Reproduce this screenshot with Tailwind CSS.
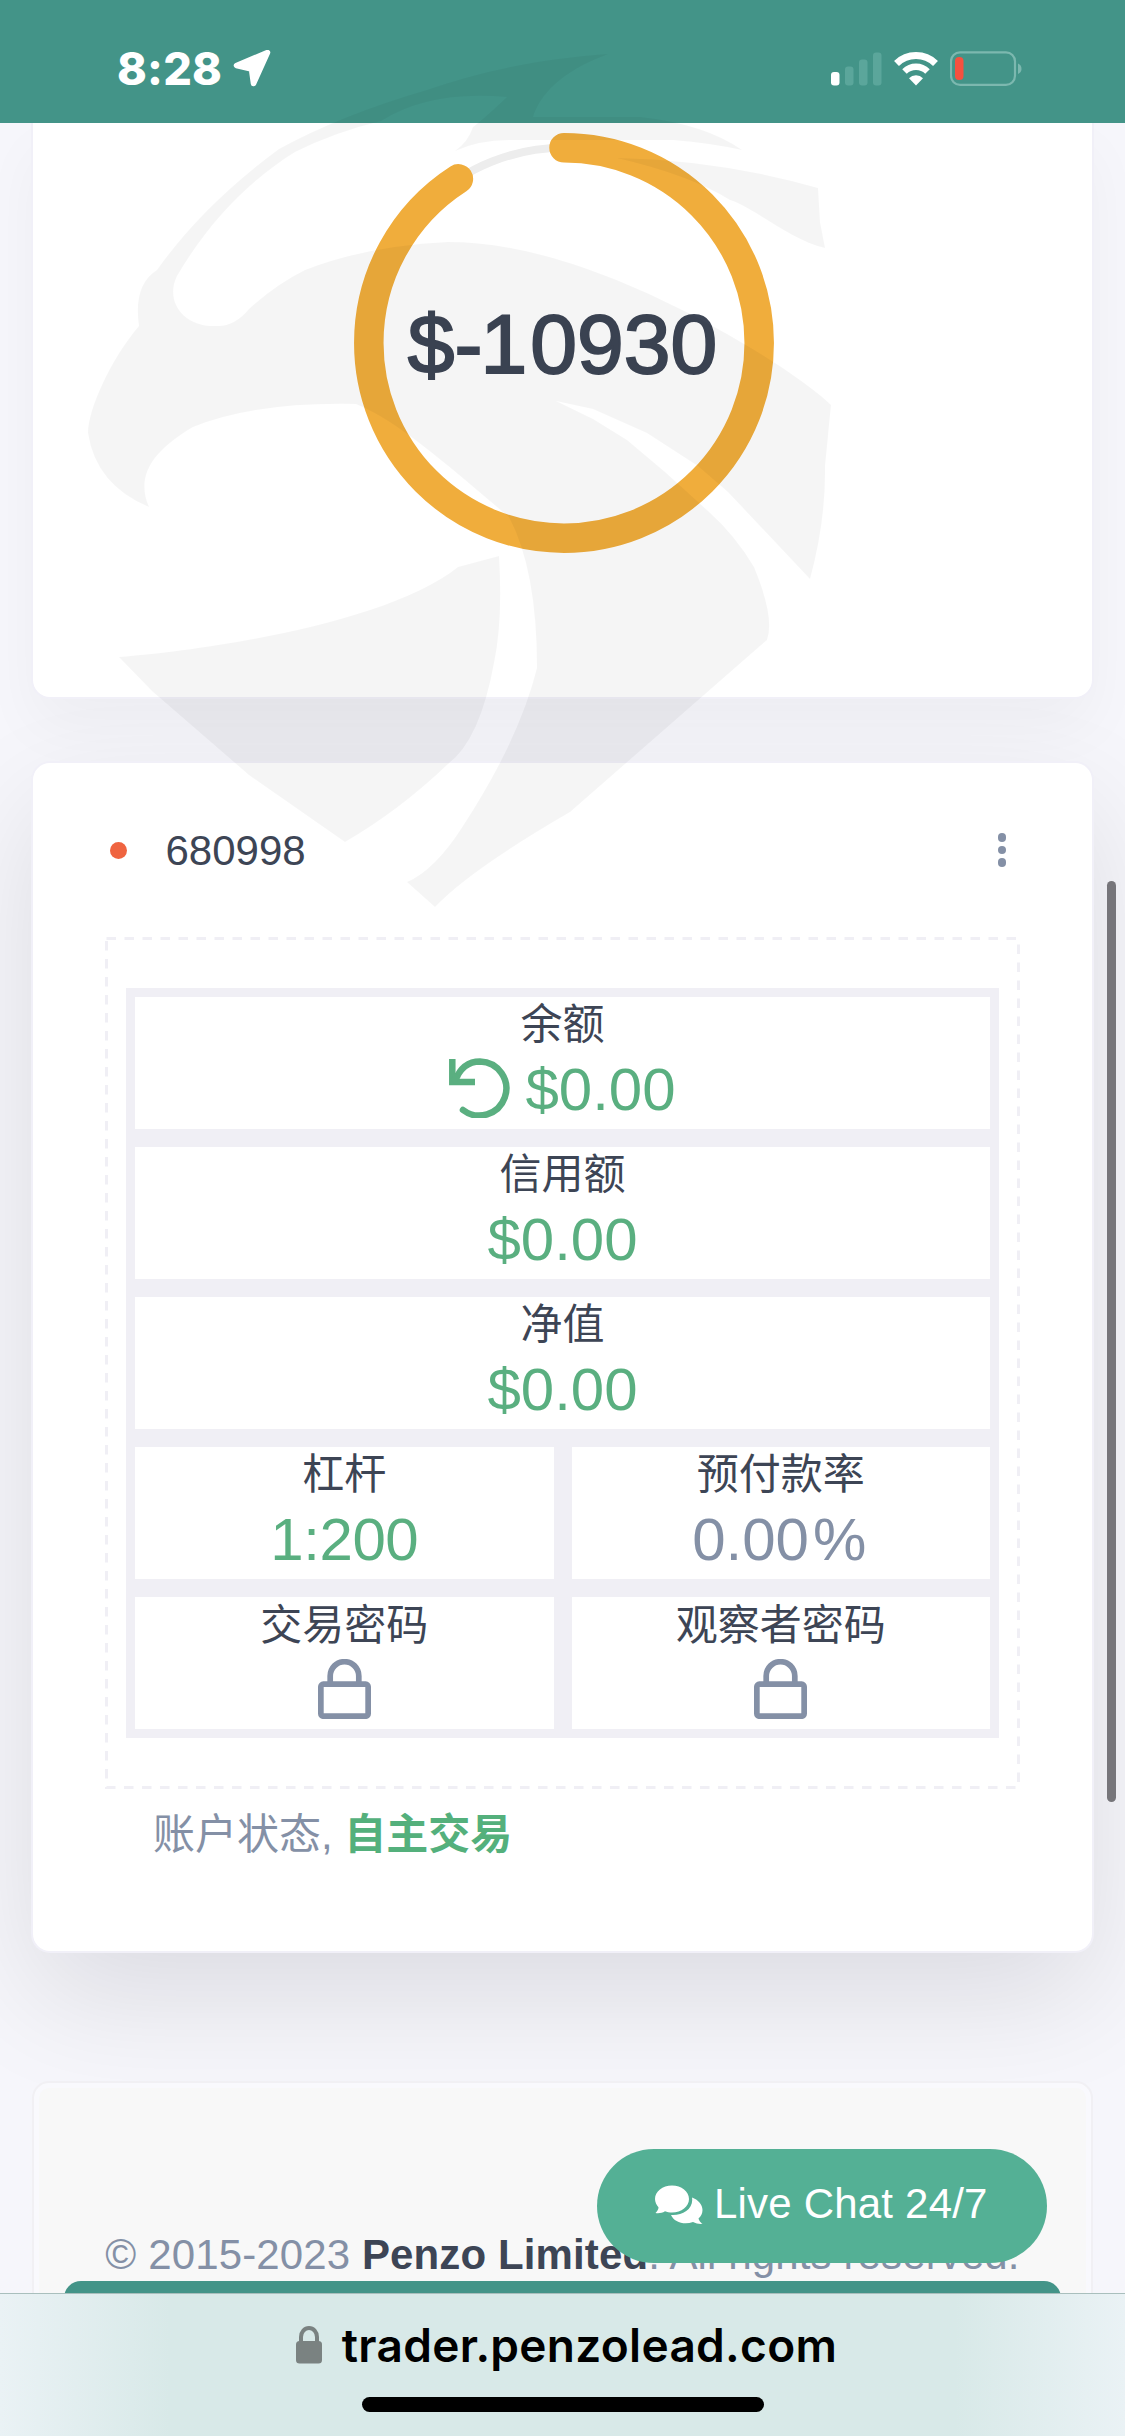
<!DOCTYPE html>
<html lang="zh">
<head>
    <meta charset="UTF-8" />
    <meta name="viewport" content="width=device-width, initial-scale=1.0" />
    <title>trader.penzolead.com</title>
    <script src="https://cdn.jsdelivr.net/npm/@tailwindcss/browser@4"></script>
</head>
<body class="bg-[#f6f6fb]">
    <div class="relative flex flex-col w-[1125px] h-[2436px] overflow-hidden font-['Liberation_Sans','Noto_Sans_CJK_SC',sans-serif] text-[42px] text-[#3d4555]">

        <!-- status bar -->
        <header class="relative z-10 flex items-center justify-between h-[123px] shrink-0 bg-[#439488] pl-[117px] pr-[103px] pt-[14px]">
            <div class="flex items-center gap-[11px]">
                <span class="font-['Inter',sans-serif] font-extrabold text-[45px] leading-none text-white tracking-[0.2px]">8:28</span>
                <svg class="w-[38px] h-[37px]" viewBox="0 0 38 37"><path d="M34.500 2.500 L3.500 15.500 L18.500 19 L20.500 33.500 Z" fill="#fff" stroke="#fff" stroke-width="5.500" stroke-linejoin="round"/></svg>
            </div>
            <div class="flex items-center gap-[12px]">
                <svg class="w-[51px] h-[34px]" viewBox="0 0 51 34">
                    <rect x="0" y="20" width="8.500" height="13.500" rx="3" fill="#fff"/>
                    <rect x="14" y="14.500" width="8.500" height="19" rx="3" fill="#5ba69b"/>
                    <rect x="28" y="7.500" width="8.500" height="26" rx="3" fill="#5ba69b"/>
                    <rect x="42" y="0.500" width="8.500" height="33" rx="3" fill="#5ba69b"/>
                </svg>
                <svg class="w-[44px] h-[34px]" viewBox="0 0 44 34" fill="none" stroke="#fff">
                    <path d="M2.500 11.500 A28 28 0 0 1 41.500 11.500" stroke-width="7"/>
                    <path d="M10.500 19.500 A16.500 16.500 0 0 1 33.500 19.500" stroke-width="6.500"/>
                    <path d="M22 33.500 L15 26.200 A10 10 0 0 1 29 26.200 Z" fill="#fff" stroke="none"/>
                </svg>
                <svg class="w-[72px] h-[35px]" viewBox="0 0 72 35">
                    <rect x="1" y="1.300" width="64" height="32.500" rx="9" fill="none" stroke="#7cb8af" stroke-width="2.200"/>
                    <rect x="5" y="6" width="8.500" height="23" rx="4" fill="#f5513f"/>
                    <path d="M68 12.500 Q71.500 14 71.500 17.700 Q71.500 21.400 68 23 Z" fill="#7cb8af"/>
                </svg>
            </div>
        </header>

        <main class="flex-1 min-h-0 px-[33px]">
            <!-- total profit -->
            <section class="h-[574px] rounded-b-[17px] bg-white shadow-[0_0_0_2px_#f1f0f8,0_30px_60px_rgba(10,0,30,0.04)]">
                <div class="relative mx-auto w-[420px] h-[430px] left-[1.5px] pt-[10px]">
                    <svg class="w-[420px] h-[420px] -rotate-90" viewBox="0 0 420 420" fill="none">
                        <circle cx="210" cy="210" r="195.200" stroke="#ededed" stroke-width="8"/>
                        <circle cx="210" cy="210" r="195.200" stroke="#f0ad3c" stroke-width="29.500" stroke-linecap="round" pathLength="100" stroke-dasharray="90.900 100"/>
                    </svg>
                    <div class="absolute inset-0 flex items-center justify-center pt-[12px] pr-[3px] text-[84px] [-webkit-text-stroke:2px_#3d4555]">$-<span class="-ml-[2px] mr-[3px]">1</span>0930</div>
                </div>
            </section>

            <!-- account card -->
            <section class="mt-[66px] h-[1188px] rounded-[17px] bg-white shadow-[0_0_0_2px_#f1f0f8,0_45px_120px_rgba(10,0,20,0.11)]">
                <div class="flex items-center h-[174px] pl-[76.5px] pr-[86px]">
                    <span class="size-[17px] rounded-full bg-[#ef6440]"></span>
                    <span class="ml-[39px] leading-[48px] pt-px">680998</span>
                    <span class="ml-auto flex flex-col gap-[4px]">
                        <i class="size-[8.5px] rounded-full bg-[#8490a6]"></i>
                        <i class="size-[8.5px] rounded-full bg-[#8490a6]"></i>
                        <i class="size-[8.5px] rounded-full bg-[#8490a6]"></i>
                    </span>
                </div>

                <div class="relative ml-[72px] w-[915px] h-[852px] pt-[51px] pl-[21px]">
                    <svg class="absolute inset-0 w-[915px] h-[852px]" viewBox="0 0 915 852" fill="none">
                        <rect x="1.500" y="1.500" width="912" height="849" stroke="#f0eff5" stroke-width="3" stroke-dasharray="9.500 8.500"/>
                    </svg>
                    <div class="grid grid-cols-2 gap-[18px] w-[873px] bg-[#f0eff5] p-[9px] text-center">
                        <div class="col-span-2 h-[132px] bg-white">
                            <p class="leading-[55px]">余额</p>
                            <div class="flex items-center justify-center h-[76px] gap-[15px] text-[60px] text-[#5aaf80]">
                                <svg class="w-[61px] h-[60px] -mt-[4px]" viewBox="0 0 61 60" fill="none" stroke="currentColor" stroke-width="6.500">
                                    <path d="M6 23 C11 10 20 3.500 31 3.500 A27 27 0 1 1 14 52" stroke-linecap="round"/>
                                    <path d="M3.300 1 V24 H26"/>
                                    <path d="M3.500 24 L9 17"/>
                                </svg>
                                <span>$0.00</span>
                            </div>
                        </div>
                        <div class="col-span-2 h-[132px] bg-white">
                            <p class="leading-[55px]">信用额</p>
                            <p class="text-[60px] leading-[76px] text-[#5aaf80]">$0.00</p>
                        </div>
                        <div class="col-span-2 h-[132px] bg-white">
                            <p class="leading-[55px]">净值</p>
                            <p class="text-[60px] leading-[76px] text-[#5aaf80]">$0.00</p>
                        </div>
                        <div class="h-[132px] bg-white">
                            <p class="leading-[55px]">杠杆</p>
                            <p class="text-[60px] leading-[76px] text-[#5aaf80] tracking-[-0.4px]">1:200</p>
                        </div>
                        <div class="h-[132px] bg-white">
                            <p class="leading-[55px]">预付款率</p>
                            <p class="pr-[3px] text-[60px] leading-[76px] text-[#8490a6]">0.00<span class="ml-[4px]">%</span></p>
                        </div>
                        <div class="h-[132px] bg-white">
                            <p class="leading-[57px]">交易密码</p>
                            <svg class="mx-auto mt-[4.5px] w-[53px] h-[60px]" viewBox="0 0 53 60" fill="none" stroke="#8490a6" stroke-width="5.700">
                                <rect x="2.850" y="25.200" width="47.300" height="32" rx="2.500"/>
                                <path d="M12.200 25 V17 A14.300 14.300 0 0 1 40.800 17 V25"/>
                            </svg>
                        </div>
                        <div class="h-[132px] bg-white">
                            <p class="leading-[57px]">观察者密码</p>
                            <svg class="mx-auto mt-[4.5px] w-[53px] h-[60px]" viewBox="0 0 53 60" fill="none" stroke="#8490a6" stroke-width="5.700">
                                <rect x="2.850" y="25.200" width="47.300" height="32" rx="2.500"/>
                                <path d="M12.200 25 V17 A14.300 14.300 0 0 1 40.800 17 V25"/>
                            </svg>
                        </div>
                    </div>
                </div>

                <p class="pl-[120px] pt-[17px] leading-[58px] text-[#8490a6]">账户状态, <b class="text-[#54b07c]">自主交易</b></p>
            </section>

            <!-- footer -->
            <footer class="-mx-px mt-[130px] h-[300px] rounded-[17px] border-2 border-[#f1f0f4] bg-[#f8f8f8] pt-[147px] text-center leading-[50px] tracking-[0.12px] text-[#8490a6] whitespace-nowrap shadow-[inset_0_0_0_5px_#f9f9fd]">© 2015-2023 <b class="text-[#3d4555]">Penzo Limited</b>. All rights reserved.</footer>
        </main>

        <!-- floating chat button -->
        <div class="absolute left-[597px] top-[2149px] flex items-center w-[450px] h-[114px] rounded-full bg-[#54b095] pl-[58px] pb-[4px] gap-[11px] text-white">
            <svg class="w-[48px] h-[39px]" viewBox="0 0 48 39" fill="#fff">
                <path d="M17 0.500 C26.500 0.500 34 6.500 34 14 C34 21.500 26.500 27.500 17 27.500 C14.500 27.500 12 27 10 26.200 C7 28 4 28.500 0.500 28 C2.500 26 3.500 24 3.500 22.200 C1.500 20 0 17 0 14 C0 6.500 7.500 0.500 17 0.500 Z"/>
                <path d="M37 12.500 C43 14.500 47.500 19.500 47.500 25 C47.500 28.500 46 31.500 43.500 33.500 C44 35.500 45.500 37.500 47.500 38.800 C44.500 39.200 41 38.500 38 37 C29 40.500 19 37 16 30 C27 31 39 24 37 12.500 Z"/>
            </svg>
            <span class="leading-[48px] tracking-[0.2px]">Live Chat 24/7</span>
        </div>

        <div class="absolute left-[64px] right-[64px] top-[2281px] h-[40px] rounded-t-[17px] bg-[#439488]"></div>
        <div class="absolute left-[1107px] top-[881px] w-[9px] h-[921px] rounded-full bg-[#76757a]"></div>

        <!-- browser bar -->
        <div class="relative z-10 flex flex-col items-center h-[143px] shrink-0 border-t border-[#a9bfbd] bg-[linear-gradient(90deg,#eaf2f5_0,#d8e9e8_170px,#d8e9e8_955px,#eaf2f5_100%)] pt-[21px]">
            <div class="flex items-center gap-[20px] ml-[8px] h-[60px] font-['Inter',sans-serif] font-semibold text-[46px] tracking-[0.3px] text-black">
                <svg class="w-[26px] h-[38px]" viewBox="0 0 26 38"><rect y="15" width="26" height="22.500" rx="3.500" fill="#7a8281"/><path d="M5 17 V11 A8 9 0 0 1 21 11 V17" fill="none" stroke="#7a8281" stroke-width="4"/></svg>
                <span>trader.penzolead.com</span>
            </div>
            <div class="mt-[22px] w-[402px] h-[15px] rounded-full bg-black"></div>
        </div>

        <!-- eagle watermark -->
        <svg class="absolute inset-0 z-20 w-[1125px] h-[2436px] pointer-events-none" viewBox="0 0 1125 2436" fill="#000" fill-opacity="0.04">
            <path d="M608 54 C540 59 480 71 427 90 Q341 115 279 149 Q203 205 157 270 Q133 285 139 326 C110 360 88 410 88 433 Q96 485 149 507 C135 475 154 450 193 427 Q254 402 356 404 C400 422 448 466 509 517 Q537 570 537 668 Q519 740 463 826 Q435 870 407 882 L435 907 Q470 870 570 812 L767 640 Q775 618 754 567 Q735 535 708 511 L665 472 L627 440 L593 419 L556 401 L593 409 L647 433 L698 466 L728 492 L810 579 Q826 520 825 466 L831 405 C800 375 700 312 606 276 Q519 242 448 242 Q366 246 305 270 Q275 285 249 309 Q235 326 218 326 C182 328 165 300 177 276 C210 220 250 180 295 152 Q335 132 381 121 Q430 90 507 97 Q485 118 473 127 Q468 142 455 151 Q480 139 517 140 L673 140 Q710 143 742 150 Q705 124 640 117 L533 117 C540 95 560 72 608 54 Z"/>
            <path d="M617 158 Q720 160 818 188 L820 222 L825 248 C790 240 755 208 730 200 Q690 175 617 158 Z"/>
            <path d="M119 657 C210 650 390 622 458 567 L499 556 Q503 620 494 663 Q480 740 448 764 Q400 810 345 842 L249 775 L152 691 Z"/>
        </svg>
    </div>
</body>
</html>
